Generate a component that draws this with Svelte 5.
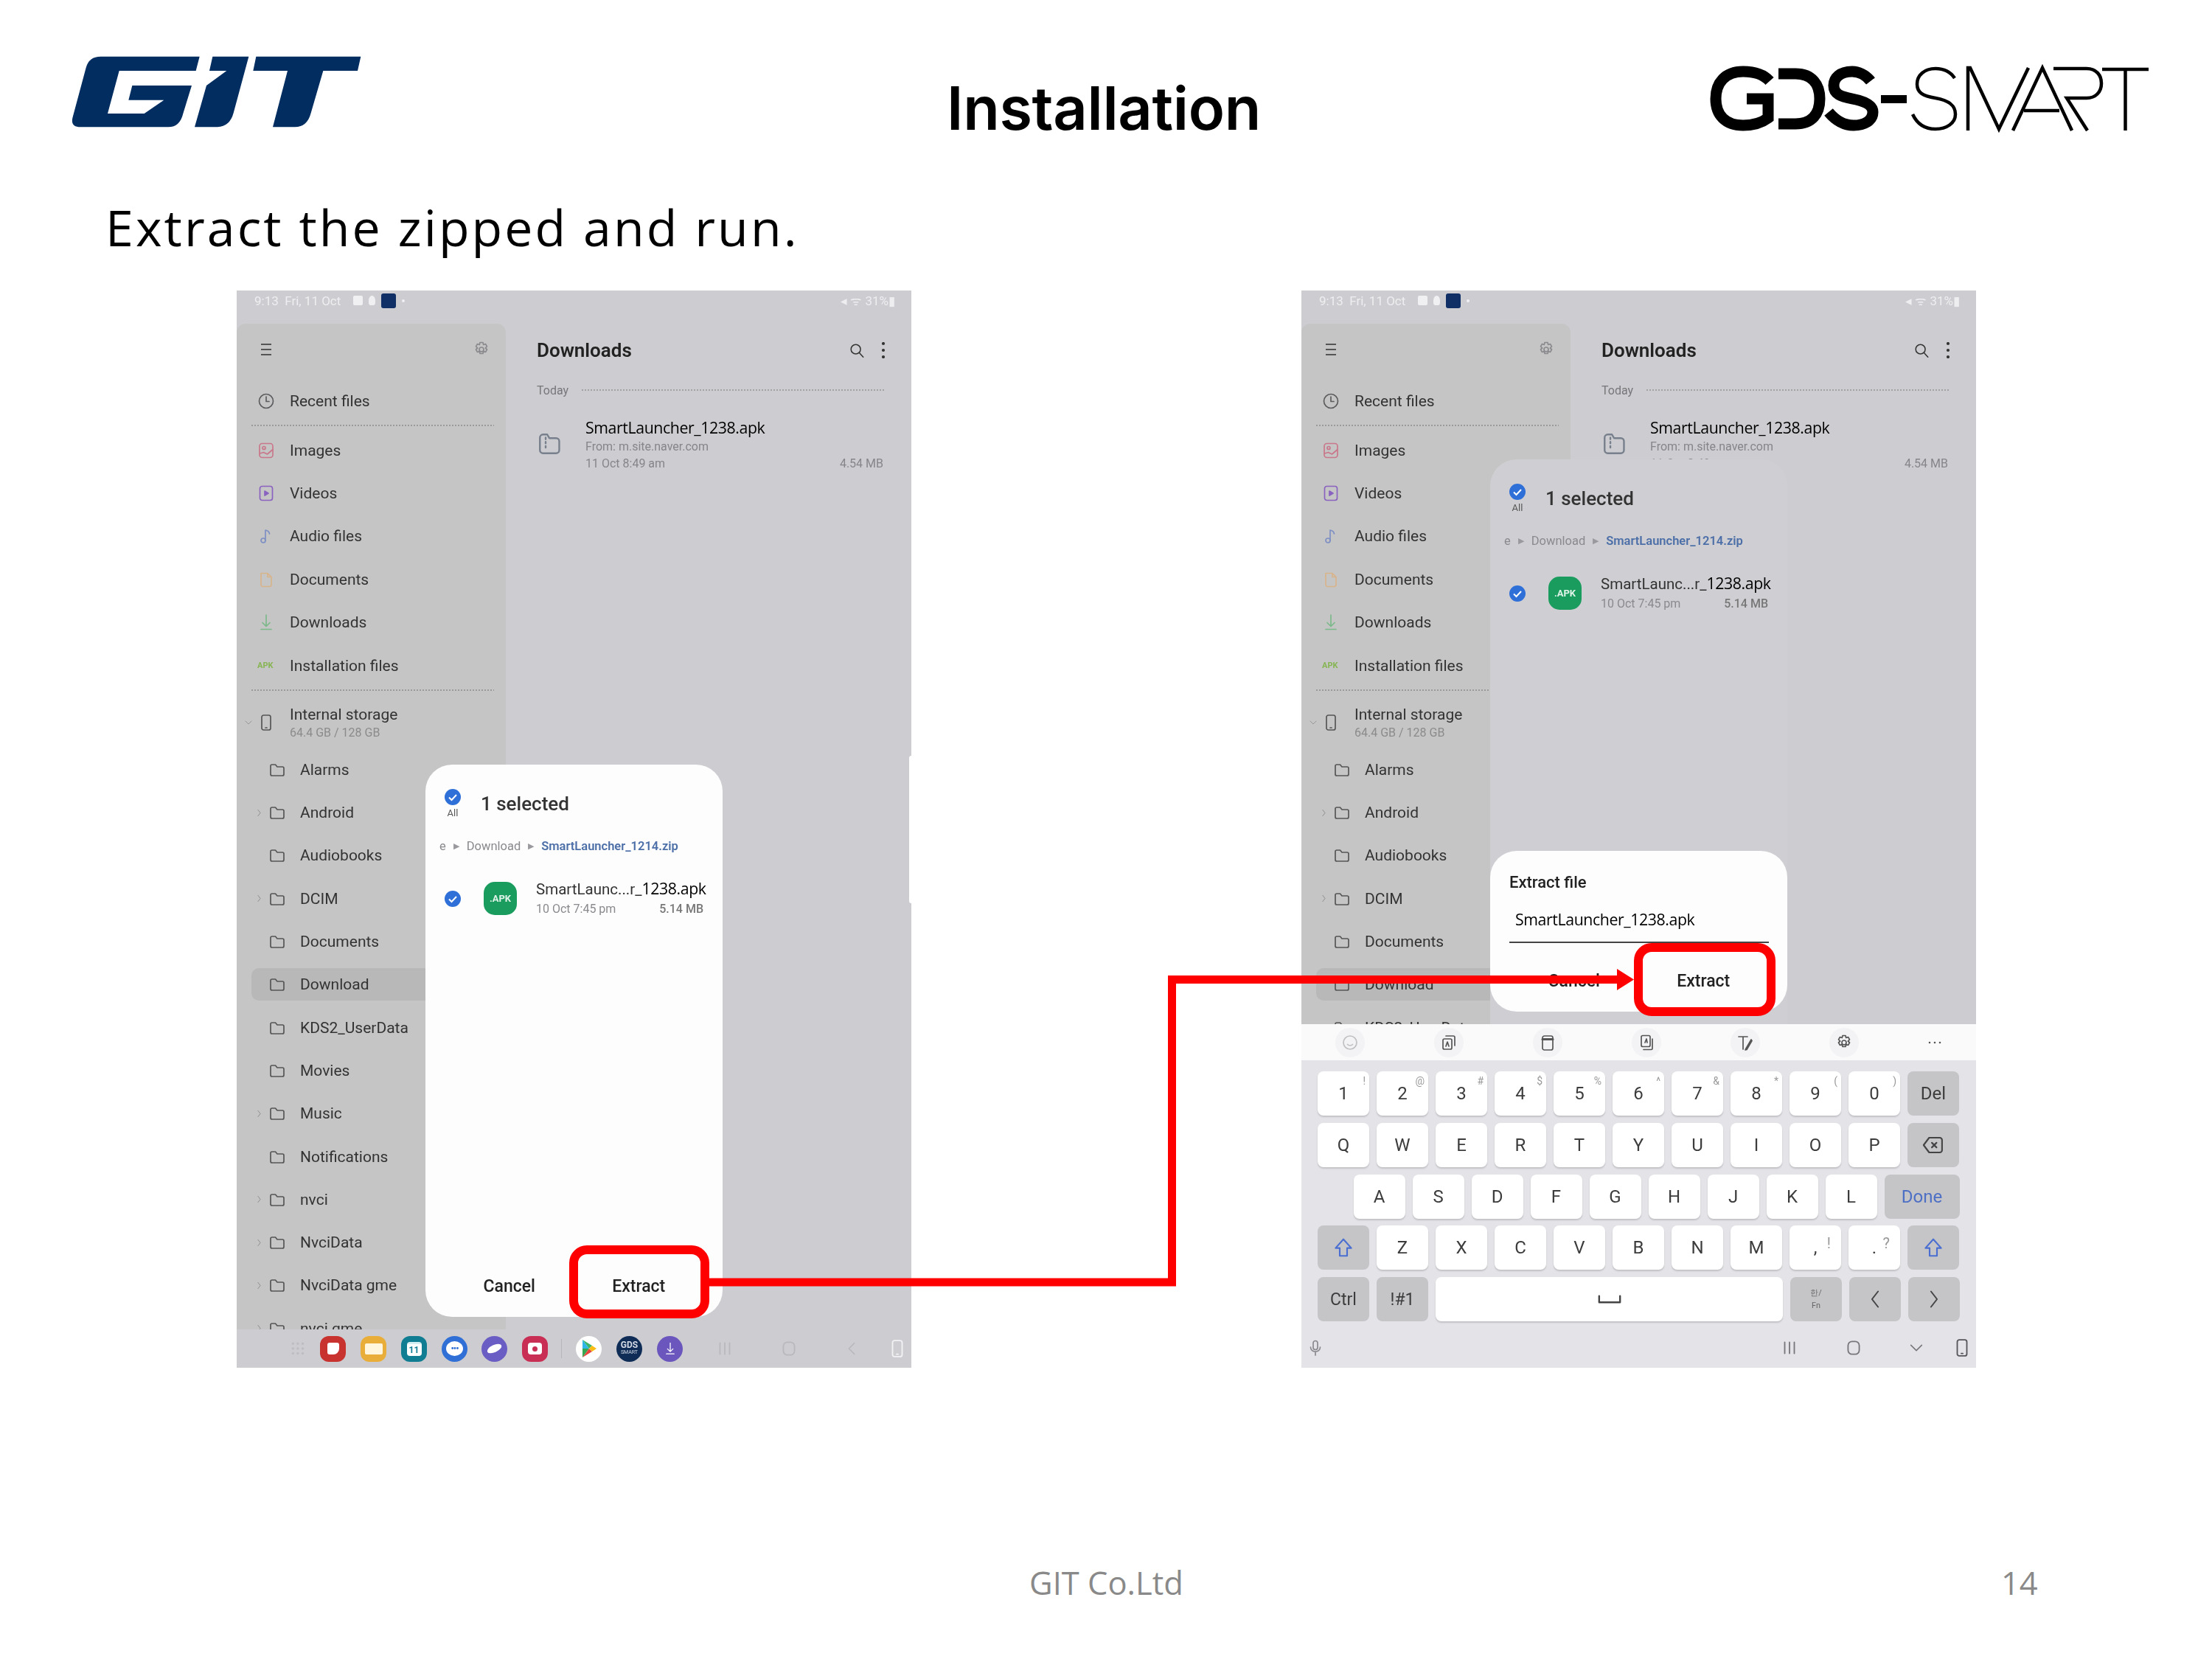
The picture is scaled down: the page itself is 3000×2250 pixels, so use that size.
<script>
  const nav = [
    ['image', 'Images', '#c9778a'],
    ['video', 'Videos', '#8a62c0'],
    ['music', 'Audio files', '#7e8fc4'],
    ['doc', 'Documents', '#d8b48c'],
    ['down', 'Downloads', '#7cb98b']
  ];
  const folders = [
    ['Alarms', 0], ['Android', 1], ['Audiobooks', 0], ['DCIM', 1], ['Documents', 0],
    ['Download', 0], ['KDS2_UserData', 0], ['Movies', 0], ['Music', 1], ['Notifications', 0],
    ['nvci', 1], ['NvciData', 1], ['NvciData gme', 1], ['nvci gme', 1]
  ];
  const row1 = [['1','!'],['2','@'],['3','#'],['4','$'],['5','%'],['6','^'],['7','&'],['8','*'],['9','('],['0',')']];
  const row2 = [...'QWERTYUIOP'];
  const row3 = [...'ASDFGHJKL'];
  const row4 = [...'ZXCVBNM'];
  const dock = [
    ['#c8322f', 'note', ''], ['#e9ae3a', 'folder', ''], ['#117d93', 'cal', '11'], ['#2f6fd6', 'msg', '•••'],
    ['#6a5ec4', 'net', ''], ['#c92f55', 'cam', '']
  ];
  const tools = ['smile', 'trans', 'clip', 'copy', 'pen', 'gear', 'more'];
</script>

{#snippet ic(n, c = '#5d5d60', s = 24)}
  <svg class="ic" width={s} height={s} viewBox="0 0 24 24" fill="none" stroke={c} stroke-width="1.7" stroke-linecap="round" stroke-linejoin="round">
    {#if n === 'menu'}<path d="M5 5h14M5 12h14M5 19h14" stroke-width="2.2" stroke-linecap="butt"/>
    {:else if n === 'gear'}<circle cx="12" cy="12" r="3"/><path d="M10 2.500h4l.7 3 2.800-1 2 3.400-2.200 2.100 2.200 2-2 3.500-2.800-1-.7 3h-4l-.7-3-2.800 1-2-3.500 2.200-2-2.200-2.100 2-3.400 2.800 1z"/>
    {:else if n === 'clock'}<circle cx="12" cy="12" r="9.500"/><path d="M12 6v6.500h4"/>
    {:else if n === 'image'}<rect x="3" y="2.500" width="18" height="19" rx="3.500"/><circle cx="9" cy="8.500" r="2"/><path d="M3.500 16l5-1.500 5 2.500 7-6"/>
    {:else if n === 'video'}<rect x="3.500" y="2.500" width="17" height="19" rx="3"/><path d="M10 9l5 3-5 3z" fill={c}/>
    {:else if n === 'music'}<circle cx="8" cy="18" r="3"/><path d="M11 18V4c3 .5 5 2 5.500 5"/>
    {:else if n === 'doc'}<path d="M5 3.500h9l5 5v10.500a2.500 2.500 0 0 1-2.500 2.500h-9a2.500 2.500 0 0 1-2.500-2.500zM14 3.500v5h5"/>
    {:else if n === 'down'}<path d="M12 2v15M7 12.500l5 5 5-5M5 21.500h14"/>
    {:else if n === 'phone'}<rect x="6" y="2" width="12" height="20" rx="2.500"/><path d="M11 19h2"/>
    {:else if n === 'folder'}<path d="M3 7a2 2 0 0 1 2-2h4.500l2.500 3h7a2 2 0 0 1 2 2v8a2 2 0 0 1-2 2H5a2 2 0 0 1-2-2z"/>
    {:else if n === 'search'}<circle cx="10.500" cy="10.500" r="7"/><path d="M16 16l5.500 6"/>
    {:else if n === 'zip'}<path d="M3 6a3 3 0 0 1 3-3h4l2 3.500h6.500a3 3 0 0 1 3 3V18a3 3 0 0 1-3 3H6a3 3 0 0 1-3-3zM8.500 6v1.500M8.500 10v1.500M8.500 14v1.500"/>
    {:else if n === 'smile'}<circle cx="12" cy="12" r="9"/><path d="M8.500 14.500c2 2 5 2 7 0"/>
    {:else if n === 'trans'}<rect x="4" y="7" width="12" height="14" rx="2"/><path d="M8 3h10a2 2 0 0 1 2 2v11M8 17l2-6 2 6"/>
    {:else if n === 'clip'}<rect x="5" y="3" width="14" height="19" rx="2.500"/><path d="M5 7.500h14" stroke-width="3"/>
    {:else if n === 'copy'}<rect x="5" y="2.500" width="12" height="15" rx="2"/><path d="M20 7v13a1.500 1.500 0 0 1-1.500 1.500H8M10 12l2-5 1 5"/>
    {:else if n === 'pen'}<path d="M3 4h12M9 4v17M20 8L13 20l-1 2 2-.500 7-12z"/>
    {:else if n === 'more'}<path d="M5 12h.01M12 12h.01M19 12h.01" stroke-width="2.600"/>
    {:else if n === 'bars'}<path d="M6 5v14M12 5v14M18 5v14"/>
    {:else if n === 'home'}<rect x="5" y="4" width="14" height="16" rx="5"/>
    {:else if n === 'back'}<path d="M16 4l-8 8 8 8"/>
    {:else if n === 'hide'}<path d="M4 8l8 8 8-8"/>
    {:else if n === 'mic'}<rect x="9" y="2.500" width="6" height="12" rx="3"/><path d="M5.500 11c0 8 13 8 13 0M12 18v4"/>
    {:else if n === 'shift'}<path d="M12 3l8.500 9.500H16V21H8v-8.500H3.500z"/>
    {:else if n === 'del'}<path d="M7.500 4H19a2.500 2.500 0 0 1 2.500 2.500v11A2.500 2.500 0 0 1 19 20H7.500L1.500 12zM10.500 9.500l5 5M15.500 9.500l-5 5"/>
    {:else if n === 'space'}<path d="M2 9v6h20V9"/>
    {:else if n === 'left'}<path d="M15.500 3l-7 9 7 9"/>
    {:else if n === 'right'}<path d="M8.500 3l7 9-7 9"/>
    {/if}
  </svg>
{/snippet}

{#snippet check(s = 22)}
  <svg class="ic" width={s} height={s} viewBox="0 0 22 22">
    <circle cx="11" cy="11" r="11" fill="#2f6fd8"/>
    <path d="M6 11.500l3.500 3.500L16 8" fill="none" stroke="#fff" stroke-width="2"/>
  </svg>
{/snippet}

{#snippet fileManager()}
  <aside class="side">
    <div class="side-head">
      {@render ic('menu', '#555', 24)}
      {@render ic('gear', '#8b8b8f', 24)}
    </div>
    <div class="nav-row">{@render ic('clock')}<span>Recent files</span></div>
    <div class="rule"></div>
    {#each nav as [n, label, c]}
      <div class="nav-row">{@render ic(n, c)}<span>{label}</span></div>
    {/each}
    <div class="nav-row"><b class="apk">APK</b><span>Installation files</span></div>
    <div class="rule tight"></div>
    <div class="storage">
      <span class="chev open">{@render ic('hide', '#8f8f8f', 12)}</span>
      {@render ic('phone', '#555', 24)}
      <div class="storage-txt"><span>Internal storage</span><small>64.4 GB / 128 GB</small></div>
    </div>
    {#each folders as [name, more]}
      <div class="folder" class:hl={name === 'Download'}>
        <span class="chev">{#if more}{@render ic('right', '#7f7f7f', 11)}{/if}</span>
        {@render ic('folder', '#555', 24)}
        <span>{name}</span>
      </div>
    {/each}
  </aside>
  <section class="pane">
    <div class="pane-head">
      <h3>Downloads</h3>
      <span class="pane-tools">
        {@render ic('search', '#333', 22)}
        <svg class="ic" width="6" height="22" viewBox="0 0 6 22"><path d="M3 2v.01M3 11v.01M3 20v.01" stroke="#333" stroke-width="4.200" stroke-linecap="round"/></svg>
      </span>
    </div>
    <div class="today"><span>Today</span><i></i></div>
    <div class="file">
      <span class="zip">{@render ic('zip', '#77808c', 34)}</span>
      <div class="file-txt">
        <span class="apkname">SmartLauncher_1238.apk</span>
        <small>From: m.site.naver.com</small>
        <small class="meta"><span>11 Oct 8:49 am</span><span>4.54 MB</span></small>
      </div>
    </div>
  </section>
{/snippet}

{#snippet status()}
  <div class="status">
    <span class="st-left">9:13&nbsp;&nbsp;Fri, 11 Oct
      <i class="st-a"></i><i class="st-b"></i><i class="st-c"></i><i class="st-d"></i>
    </span>
    <span class="st-right">◂ ᯤ 31%▮</span>
  </div>
{/snippet}

{#snippet selection()}
  <div class="sel-head">
    <div class="sel-all">{@render check(22)}<small>All</small></div>
    <h4>1 selected</h4>
  </div>
  <div class="crumb"><span>e</span><em>▶</em><span>Download</span><em>▶</em><b>SmartLauncher_1214.zip</b></div>
  <div class="sel-row">
    {@render check(22)}
    <div class="apk-tile">.APK</div>
    <div class="sel-txt">
      <span class="sel-name"><span>SmartLaunc...r_</span><strong>1238.apk</strong></span>
      <small><span>10 Oct 7:45 pm</span><b>5.14 MB</b></small>
    </div>
  </div>
{/snippet}

{#snippet buttons()}
  <div class="btns"><span>Cancel</span><span>Extract</span></div>
{/snippet}

<div class="slide">
  <header class="top">
    <svg class="git" width="460" height="150" viewBox="0 0 1380 450" fill="#012d60">
      <path d="M632 80H230Q182 80 170 125L115 330Q107 367 148 367H505Q552 367 565 312L600 198H358L343 257H487L407 312H258L305 138H617Z"/>
      <path d="M685 80L672 138H742L660 198L612 367H705Q755 365 770 310L832 80Z"/>
      <path d="M862 80H1288L1275 138H1135L1085 310Q1070 367 1020 367H930L990 138H850Z"/>
    </svg>
    <h1>Installation</h1>
    <svg class="gds" width="660" height="140" viewBox="0 0 660 140" fill="none" stroke="#000">
      <g stroke-width="15">
        <path d="M110 50C102 41 90 37 74 37C50 37 37 52 37 74C37 96 50 110 74 110C88 110 100 106 108 100V74H79"/>
        <path d="M122 40H145C168 40 178 55 178 74C178 94 168 108 145 108H122"/>
        <path d="M247 50C240 41 230 37 222 37C205 37 197 46 197 56C197 68 207 71 222 74C238 77 250 82 250 92C250 104 238 110 224 110C212 110 200 104 190 92"/>
      </g>
      <rect x="261" y="69" width="35" height="11" fill="#000" stroke="none"/>
      <g stroke-width="4.500">
        <path d="M361 46C355 37 346 33 335 33C320 33 310 42 310 54C310 66 318 70 335 73C352 76 362 82 362 95C362 107 350 115 335 115C320 115 310 108 304 95"/>
        <path d="M379 117V32H382L421 115L461 32"/>
        <path d="M440 117L480 32L520 117M455 90H503"/>
        <path d="M495 33H540C553 33 560 42 560 53C560 65 552 73 540 73H513L541 117"/>
        <path d="M561 34H624M592.500 34V117"/>
      </g>
    </svg>
  </header>

  <h2>Extract the zipped and run.</h2>

  <div class="shots">
    <div class="screen">
      {@render status()}
      <div class="main">
        {@render fileManager()}
        <div class="dialog d-full">
          {@render selection()}
          {@render buttons()}
        </div>
      </div>
      <div class="dock">
        <span class="dots"></span>
        {#each dock as [c, k, t]}
          <i class="app" style="background:{c}"><em class={k}>{t}</em></i>
        {/each}
        <span class="sep"></span>
        <i class="app play"><svg width="24" height="26" viewBox="0 0 24 26"><path d="M3 1v12h9z" fill="#2fb6e8"/><path d="M3 25V13h9z" fill="#35a853"/><path d="M3 1l9 12 4-4z" fill="#3bb56a"/><path d="M3 25l9-12 4 4z" fill="#e8453c"/><path d="M16 9l6 4-6 4-4-4z" fill="#f8bc14"/></svg></i>
        <i class="app gdsapp">GDS<small>SMART</small></i>
        <i class="app dlapp">{@render ic('down', '#fff', 18)}</i>
        <span class="softkeys">
          {@render ic('bars', '#b9b9bd', 26)}
          {@render ic('home', '#b9b9bd', 26)}
          {@render ic('back', '#b9b9bd', 22)}
          {@render ic('phone', '#f2f2f4', 26)}
        </span>
      </div>
      <div class="sliver"></div>
    </div>

    <div class="screen">
      {@render status()}
      <div class="main">
        {@render fileManager()}
        <div class="dialog d-dim">{@render selection()}</div>
        <div class="dialog d-extract">
          <h5>Extract file</h5>
          <div class="field"><span>SmartLauncher_1238.apk</span></div>
          {@render buttons()}
        </div>
      </div>
      <div class="kbd">
        <div class="toolbar">
          {#each tools as t, i}
            <span class="tool" class:faint={i === 0}>{@render ic(t, i === 0 ? '#c0c0c2' : '#555', 24)}</span>
          {/each}
        </div>
        <div class="keys">
          <div class="krow">
            {#each row1 as [a, b]}<span class="key">{a}<sup>{b}</sup></span>{/each}
            <span class="key fn">Del</span>
          </div>
          <div class="krow">
            {#each row2 as a}<span class="key">{a}</span>{/each}
            <span class="key fn">{@render ic('del', '#444', 30)}</span>
          </div>
          <div class="krow indent">
            {#each row3 as a}<span class="key">{a}</span>{/each}
            <span class="key fn done">Done</span>
          </div>
          <div class="krow">
            <span class="key fn">{@render ic('shift', '#4a6fd0', 30)}</span>
            {#each row4 as a}<span class="key">{a}</span>{/each}
            <span class="key">,<sup class="big">!</sup></span>
            <span class="key">.<sup class="big">?</sup></span>
            <span class="key fn">{@render ic('shift', '#4a6fd0', 30)}</span>
          </div>
          <div class="krow">
            <span class="key fn sm">Ctrl</span>
            <span class="key fn sm">!#1</span>
            <span class="key space">{@render ic('space', '#444', 34)}</span>
            <span class="key fn lang"><small>한/</small><small>Fn</small></span>
            <span class="key fn">{@render ic('left', '#444', 28)}</span>
            <span class="key fn">{@render ic('right', '#444', 28)}</span>
          </div>
        </div>
        <div class="kbd-nav">
          {@render ic('mic', '#8a8a8e', 24)}
          <span class="softkeys">
            {@render ic('bars', '#77777b', 26)}
            {@render ic('home', '#77777b', 26)}
            {@render ic('hide', '#77777b', 22)}
            {@render ic('phone', '#55555a', 26)}
          </span>
        </div>
      </div>
    </div>
  </div>

  <footer>
    <span class="foot-mid">GIT Co.Ltd</span>
    <span class="foot-num">14</span>
  </footer>

  <svg class="overlay" width="3000" height="2250" viewBox="0 0 3000 2250" fill="none" stroke="#fe0000" stroke-width="12">
    <rect x="778" y="1695" width="178" height="87" rx="18"/>
    <rect x="2222" y="1285" width="180" height="87" rx="18"/>
    <path d="M962 1739H1589.500V1328.500H2196" stroke-width="11"/>
    <path d="M2193 1314L2216 1328.500L2193 1343Z" fill="#fe0000" stroke="none"/>
  </svg>
</div>

<style>
  :global(body) { margin: 0; background: #fff; }
  .slide { position: relative; width: 3000px; height: 2250px; overflow: hidden; background: #fff; font-family: Roboto, sans-serif; display: flex; flex-direction: column; }
  .ic { display: block; flex: none; }

  .top { height: 220px; display: grid; grid-template-columns: 1fr auto 1fr; padding: 50px 50px 0 60px; box-sizing: border-box; align-items: start; }
  .git { display: block; }
  .gds { display: block; justify-self: end; margin-top: 10px; }
  h1 { margin: 49px 16px 0 0; font: 600 81px/1.2 Inter, sans-serif; letter-spacing: -.3px; color: #000; }
  h2 { margin: 43px 0 0 143px; height: 131px; font: 400 68px/90px "Open Sans", sans-serif; letter-spacing: 3.100px; color: #000; }

  .shots { display: flex; gap: 529px; padding-left: 321px; }
  .screen { position: relative; width: 915px; height: 1461px; display: flex; flex-direction: column; background: #cdcdd1; color: #333; overflow: hidden; filter: blur(.55px); font-size: 21px; }
  .status { height: 45px; flex: none; display: flex; justify-content: space-between; align-items: center; padding: 0 22px 18px 24px; box-sizing: border-box; color: #eeeef0; font-size: 17px; }
  .st-left { display: flex; align-items: center; gap: 8px; }
  .st-a { width: 13px; height: 13px; background: #f0f0f2; border-radius: 2px; margin-left: 9px; }
  .st-b { width: 9px; height: 13px; background: #f0f0f2; border-radius: 50% 50% 30% 30%; }
  .st-c { width: 20px; height: 20px; background: #102f66; border-radius: 3px; }
  .st-d { width: 4px; height: 4px; background: #f0f0f2; border-radius: 50%; }

  .main { position: relative; flex: 1; min-height: 0; display: flex; overflow: hidden; }
  .side { width: 365px; flex: none; background: #c5c5c5; border-radius: 12px 12px 0 0; box-sizing: border-box; overflow: hidden; }
  .side-head { height: 68px; display: flex; justify-content: space-between; align-items: center; padding: 2px 21px 0 28px; box-sizing: border-box; margin-bottom: 8px; }
  .nav-row { height: 58.400px; display: flex; align-items: center; gap: 20px; padding-left: 28px; white-space: nowrap; }
  .apk { width: 24px; font-size: 11px; font-weight: 700; color: #86b552; flex: none; }
  .rule { height: 8px; margin: 0 16px 0 20px; background: repeating-linear-gradient(90deg, #9a9a9a 0 2px, transparent 2px 4px) center / 100% 2px no-repeat; }
  .rule.tight { height: 8px; }
  .storage { height: 75px; display: flex; align-items: center; padding: 6px 0 0 10px; box-sizing: border-box; }
  .chev { width: 12px; height: 12px; display: flex; align-items: center; justify-content: center; flex: none; }
  .chev.open { margin-right: 6px; }
  .storage-txt { display: flex; flex-direction: column; margin-left: 20px; gap: 3px; white-space: nowrap; }
  .storage-txt small { color: #8b8b8b; font-size: 16px; }
  .folder { height: 58.300px; display: flex; align-items: center; padding-left: 24px; white-space: nowrap; box-sizing: border-box; }
  .folder > :global(svg) { margin: 0 19px 0 7px; }
  .folder.hl { height: 44px; margin: 7.150px 0 7.150px 20px; padding-left: 4px; background: #b8b8b8; border-radius: 10px 0 0 10px; }

  .pane { flex: 1; min-width: 0; padding: 0 35px 0 42px; }
  .pane-head { height: 68px; display: flex; justify-content: space-between; align-items: center; padding-top: 4px; box-sizing: border-box; }
  h3 { margin: 0; font: 600 26px Roboto, sans-serif; color: #222; }
  .pane-tools { display: flex; gap: 22px; align-items: center; }
  .today { height: 30px; margin-top: 7px; display: flex; align-items: center; gap: 18px; color: #77777a; font-size: 16px; padding-right: 2px; }
  .today i { flex: 1; height: 2px; background: repeating-linear-gradient(90deg, #a2a2a2 0 2px, transparent 2px 4px); }
  .file { display: flex; margin-top: 22px; }
  .zip { width: 66px; flex: none; padding-top: 19px; }
  .file-txt { flex: 1; display: flex; flex-direction: column; padding-right: 3px; }
  .apkname { font: 400 21.300px/28px "Open Sans", sans-serif; color: #000; letter-spacing: -.4px; white-space: nowrap; }
  .file-txt small { font-size: 16px; line-height: 23px; color: #85858a; }
  .meta { display: flex; justify-content: space-between; }

  .dialog { position: absolute; left: 256px; width: 403px; box-sizing: border-box; border-radius: 36px; background: #fdfdfe; display: flex; flex-direction: column; }
  .d-full { top: 598px; height: 749px; }
  .d-dim { top: 184px; height: 900px; background: #cfcfd3; border-radius: 36px 36px 0 0; }
  .d-extract { top: 715px; height: 218px; }
  .sel-head { display: flex; gap: 27px; padding: 33px 0 0 26px; }
  .sel-all { width: 22px; display: flex; flex-direction: column; align-items: center; gap: 3px; }
  .sel-all small { font-size: 13px; color: #555; }
  h4 { margin: 3px 0 0; font: 500 26px/34px Roboto, sans-serif; color: #333; white-space: nowrap; }
  .crumb { height: 26px; margin-top: 24px; padding-left: 19px; display: flex; align-items: center; gap: 10px; font-size: 16.500px; color: #8a8a8e; white-space: nowrap; }
  .crumb em { font-size: 11px; font-style: normal; color: #9a9a9e; }
  .crumb b { color: #4d6fa8; font-weight: 600; }
  .sel-row { margin-top: 36px; height: 45px; padding-left: 26px; display: flex; align-items: center; }
  .apk-tile { width: 45px; height: 45px; margin: 0 26px 0 31px; flex: none; border-radius: 15px; background: #1a9c5e; color: #dff3e8; font-size: 13px; font-weight: 700; display: flex; align-items: center; justify-content: center; }
  .sel-txt { width: 238px; display: flex; flex-direction: column; flex: none; }
  .sel-name { font-size: 20.500px; line-height: 26px; color: #333; white-space: nowrap; display: flex; }
  .sel-name strong { font: 400 21.300px/24px "Open Sans", sans-serif; color: #000; letter-spacing: -.4px; }
  .sel-txt small { display: flex; justify-content: space-between; padding-right: 11px; font-size: 16px; color: #8a8a8e; line-height: 24px; margin-top: 2px; }
  .sel-txt small b { font-weight: 500; color: #777; }
  .btns { margin-top: auto; height: 84px; padding: 0 26px; display: grid; grid-template-columns: 1fr 1fr; align-items: center; text-align: center; font-size: 23px; font-weight: 500; color: #222; }
  h5 { margin: 30px 0 0 26px; font: 500 22px/26px Roboto, sans-serif; color: #222; }
  .field { margin: 16px 25px 0 26px; height: 53px; border-bottom: 2px solid #444; box-sizing: border-box; padding: 7px 0 0 8px; font: 400 21.300px/28px "Open Sans", sans-serif; letter-spacing: -.4px; color: #000; white-space: nowrap; }

  .dock { height: 52px; flex: none; display: flex; align-items: center; position: relative; }
  .dots { position: absolute; left: 73px; width: 20px; height: 20px; background: radial-gradient(circle, #bdbdc1 1.500px, transparent 2px) 0 0 / 6.600px 6.600px; }
  .app { position: absolute; width: 35px; height: 35px; border-radius: 50%; display: flex; align-items: center; justify-content: center; overflow: hidden; }
  .app em { display: flex; align-items: center; justify-content: center; background: #fff; font: 700 12px/1 Roboto, sans-serif; }
  .app:nth-of-type(1) { left: 113px; border-radius: 12px; }
  .app:nth-of-type(2) { left: 168px; border-radius: 12px; }
  .app:nth-of-type(3) { left: 223px; border-radius: 12px; }
  .app:nth-of-type(4) { left: 278px; }
  .app:nth-of-type(5) { left: 332px; }
  .app:nth-of-type(6) { left: 387px; border-radius: 12px; }
  .app em.note { width: 16px; height: 16px; border-radius: 3px 3px 8px 3px; }
  .app em.folder { width: 19px; height: 15px; border-radius: 2px; background: #fff6dd; }
  .app em.cal { width: 20px; height: 19px; border-radius: 4px; color: #117d93; border-top: 3px solid #d4eef2; box-sizing: border-box; }
  .app em.msg { width: 23px; height: 20px; border-radius: 50%; color: #2f6fd6; letter-spacing: -1px; }
  .app em.net { width: 21px; height: 10px; border-radius: 50%; transform: rotate(-25deg); }
  .app em.cam { width: 19px; height: 16px; border-radius: 4px; }
  .app em.cam::after { content: ""; width: 7px; height: 7px; border-radius: 50%; background: #c92f55; }
  .sep { position: absolute; left: 440px; width: 1px; height: 26px; background: #b6b6ba; }
  .app.play { left: 460px; background: #fff; }
  .app.gdsapp { left: 515px; background: #0f2c57; color: #d5dbe6; font: 700 12px/10px Roboto, sans-serif; flex-direction: column; font-style: normal; }
  .gdsapp small { font-size: 7px; font-weight: 400; }
  .app.dlapp { left: 570px; background: #6a56bd; }
  .dock .softkeys { position: absolute; left: 649px; }
  .softkeys { display: flex; align-items: center; gap: 61px; }
  .softkeys > :global(svg:last-child) { margin-left: -23px; }

  .sliver { position: absolute; right: 0; top: 631px; width: 3px; height: 200px; background: #fff; border-radius: 3px 0 0 3px; }

  .kbd { height: 466px; flex: none; background: #e3e3e8; display: flex; flex-direction: column; }
  .toolbar { height: 49px; flex: none; background: #fafafb; display: flex; gap: 110px; align-items: center; padding-left: 54px; }
  .tool { width: 24px; display: flex; justify-content: center; position: relative; }
  .tool:not(:last-child)::before { content: ""; position: absolute; left: -8px; top: -8px; width: 40px; height: 40px; border-radius: 50%; background: #f3f3f5; }
  .tool > :global(svg) { position: relative; }
  .tool:last-child { margin-left: -11px; }
  .keys { padding: 15px 0 0 22px; display: flex; flex-direction: column; gap: 9.800px; }
  .krow { display: flex; gap: 10px; }
  .krow.indent { padding-left: 48.500px; }
  .key { position: relative; width: 70px; height: 60px; flex: none; background: #fff; border-radius: 8px; box-shadow: 0 2px 2px #c2c2c6; display: flex; align-items: center; justify-content: center; font-size: 24px; color: #3c3c3c; }
  .key sup { position: absolute; top: 6px; right: 5px; font-size: 14px; line-height: 1; color: #999; }
  .key sup.big { top: 14px; right: 14px; font-size: 20px; }
  .key.fn { background: #c5c5c8; box-shadow: none; }
  .key.sm { font-size: 23px; }
  .key.done { width: 102px; color: #4d6fc4; }
  .key.space { width: 471px; }
  .key.lang { font-size: 13px; flex-direction: column; gap: 3px; color: #666; }
  .kbd-nav { flex: 1; display: flex; align-items: center; justify-content: space-between; padding: 8px 6px 0 7px; }

  footer { position: absolute; left: 0; right: 0; top: 2116px; height: 62px; font: 400 43.500px/62px "Open Sans", sans-serif; color: #898989; }
  .foot-mid { position: absolute; left: 1396px; }
  .foot-num { position: absolute; left: 2714px; }
  .overlay { position: absolute; inset: 0; pointer-events: none; }
</style>
